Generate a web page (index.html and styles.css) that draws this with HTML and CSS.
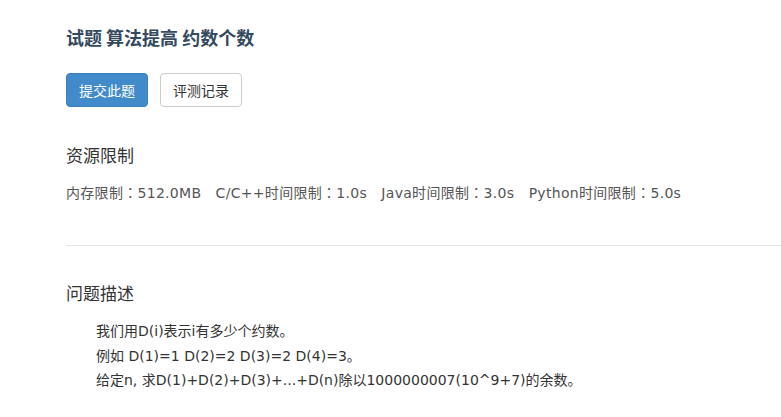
FILE: index.html
```html
<!DOCTYPE html>
<html lang="zh-CN">
<head>
    <meta charset="UTF-8">
    <meta name="viewport" content="width=device-width, initial-scale=1.0">
    <title>试题 算法提高 约数个数</title>
    <link rel="stylesheet" href="styles.css">
</head>
<body>

    <div class="problem">

        <h3 class="problem-title">试题 算法提高 约数个数</h3>

        <div class="actions">
            <a class="btn btn-primary" href="#">提交此题</a>
            <a class="btn btn-default" href="#">评测记录</a>
        </div>

        <h4 class="section-title limits-title">资源限制</h4>
        <p class="limits">内存限制：512.0MB&nbsp;&nbsp;&nbsp;C/C++时间限制：1.0s&nbsp;&nbsp;&nbsp;Java时间限制：3.0s&nbsp;&nbsp;&nbsp;Python时间限制：5.0s</p>

        <hr class="divider">

        <h4 class="section-title">问题描述</h4>
        <div class="description">
            <p>我们用D(i)表示i有多少个约数。</p>
            <p>例如 D(1)=1 D(2)=2 D(3)=2 D(4)=3。</p>
            <p>给定n, 求D(1)+D(2)+D(3)+...+D(n)除以1000000007(10^9+7)的余数。</p>
        </div>

    </div>

</body>
</html>
```

FILE: styles.css
```css
body {
    margin: 0;
    font-family: "Noto Sans CJK SC", "Liberation Sans", sans-serif;
    background: white;
    color: #333;
    overflow: hidden;
}
.problem {
    padding: 27px 0 0 66px;
}
.problem-title {
    margin: 0;
    font-size: 18px;
    line-height: 20px;
    font-weight: bold;
    color: #34495e;
}
.actions {
    display: flex;
    gap: 12px;
    margin-top: 26px;
}
.btn {
    display: inline-block;
    height: 34px;
    box-sizing: border-box;
    padding: 0 12px;
    font-size: 14px;
    line-height: 32px;
    border: 1px solid transparent;
    border-radius: 4px;
    text-decoration: none;
}
.btn-primary {
    background: #428bca;
    border-color: #3b80bd;
    color: white;
}
.btn-default {
    background: white;
    border-color: #ccc;
    color: #333;
}
.section-title {
    margin: 0;
    font-size: 17px;
    line-height: 24px;
    font-weight: normal;
    color: #333;
}
.limits-title {
    margin-top: 36px;
}
.limits {
    margin: 16px 0 0;
    font-family: "DejaVu Sans", "Noto Sans CJK JP", sans-serif;
    font-feature-settings: "locl" 0;
    font-size: 14px;
    line-height: 20px;
    letter-spacing: 0.3px;
    color: #555;
}
.divider {
    margin: 42px 0 35px;
    border: none;
    border-top: 1px solid #e5e5e5;
}
.description {
    margin-top: 14px;
    padding-left: 30px;
    font-family: "DejaVu Sans", "Noto Sans CJK SC", sans-serif;
    font-size: 14px;
    line-height: 24.5px;
    color: #333;
}
.description p {
    margin: 0;
}
```
